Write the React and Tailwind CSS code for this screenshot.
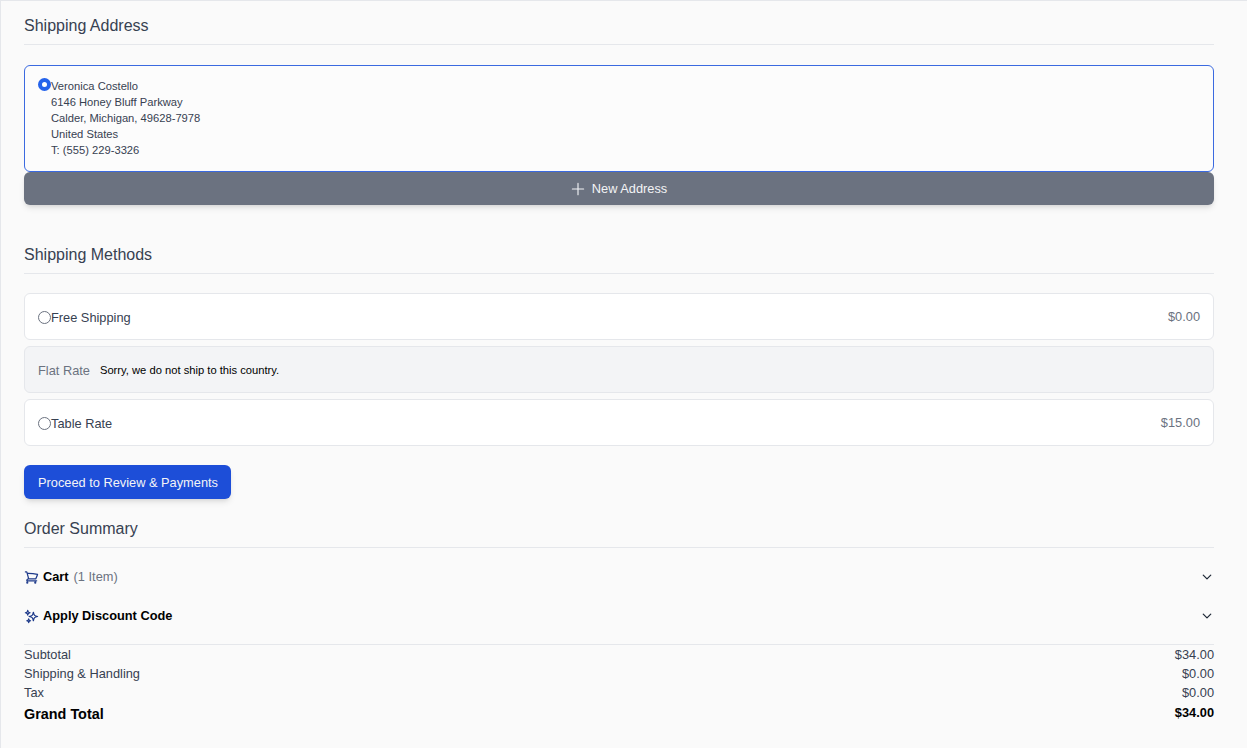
import React from "react";
import { HiOutlineChevronDown, HiOutlinePlus, HiOutlineShoppingCart, HiOutlineSparkles } from "react-icons/hi2";

const Heading = ({ children }) => (
  <div className="border-b border-[#e5e7eb] pb-[6px] text-[16px] leading-[24px] text-[#374151]">{children}</div>
);

const Radio = () => (
  <span className="h-[13px] w-[13px] shrink-0 rounded-full border-[1.5px] border-[#6b7280] bg-white" />
);

const Method = ({ name, price }) => (
  <div className="flex h-[47px] items-center justify-between rounded-md border border-[#e5e7eb] bg-white px-[13px] text-[12.8px] text-[#374151]">
    <div className="flex items-center pt-[2px]">
      <Radio />
      <span>{name}</span>
    </div>
    <span className="text-[#6b7280]">{price}</span>
  </div>
);

const Row = ({ label, value }) => (
  <div className="flex h-[19px] items-center justify-between text-[12.8px] text-[#374151]">
    <span>{label}</span>
    <span>{value}</span>
  </div>
);

const App = () => {
  return (
    <div className="min-h-[748px] border-l border-t border-[#e5e7eb] bg-[#fafafa] pl-[23px] pr-[33px] pt-[13px] font-['Liberation_Sans',Arial,sans-serif]">
      <Heading>Shipping Address</Heading>
      <div className="mt-5 h-[107px] rounded-md border border-[#3b6ae0] bg-[#fcfcfc] px-[13px] pt-[12px] text-[11.2px] leading-4 text-[#374151]">
        <div className="flex items-start">
          <span className="h-[13px] w-[13px] shrink-0 rounded-full border-[4px] border-[#2563eb] bg-white" />
          <div>
            <div>Veronica Costello</div>
            <div>6146 Honey Bluff Parkway</div>
            <div>Calder, Michigan, 49628-7978</div>
            <div>United States</div>
            <div>T: (555) 229-3326</div>
          </div>
        </div>
      </div>
      <button className="flex h-[33px] w-full items-center justify-center gap-[5px] rounded-md bg-[#6b7280] pr-[2px] text-[12.8px] text-[#f3f4f6] shadow-md">
        <HiOutlinePlus size={18} />
        New Address
      </button>

      <div className="mt-[38px]">
        <Heading>Shipping Methods</Heading>
      </div>
      <div className="mt-[19px] flex flex-col gap-[6px]">
        <Method name="Free Shipping" price="$0.00" />
        <div className="flex h-[47px] items-center gap-[10px] rounded-md border border-[#e5e7eb] bg-[#f3f4f6] px-[13px] pt-[2px] text-[12.8px] text-[#6b7280]">
          <span>Flat Rate</span>
          <span className="text-[11.2px] text-black">Sorry, we do not ship to this country.</span>
        </div>
        <Method name="Table Rate" price="$15.00" />
      </div>
      <button className="mt-[19px] block h-[34px] rounded-md bg-[#1d4ed8] pl-[14px] pr-[13px] pt-[2px] text-[12.8px] text-[#f3f4f6] shadow-md">
        Proceed to Review &amp; Payments
      </button>

      <div className="mt-[18px]">
        <Heading>Order Summary</Heading>
      </div>
      <div className="mt-[19px] flex h-[20px] items-center justify-between">
        <div className="flex items-center text-[12.8px]">
          <HiOutlineShoppingCart size={15} strokeWidth={2} className="mr-[4px] text-[#1e3a8a]" />
          <span className="font-bold text-black">Cart</span>
          <span className="ml-[5px] text-[#6b7280]">(1 Item)</span>
        </div>
        <HiOutlineChevronDown size={12} strokeWidth={2.5} className="mr-px text-[#1f2937]" />
      </div>
      <div className="mt-[19px] flex h-[20px] items-center justify-between">
        <div className="flex items-center text-[12.8px]">
          <HiOutlineSparkles size={15} strokeWidth={2} className="mr-[4px] -scale-x-100 text-[#1e3a8a]" />
          <span className="font-bold text-black">Apply Discount Code</span>
        </div>
        <HiOutlineChevronDown size={12} strokeWidth={2.5} className="mr-px text-[#1f2937]" />
      </div>
      <div className="mt-[18px] border-t border-[#e5e7eb]">
        <Row label="Subtotal" value="$34.00" />
        <Row label="Shipping & Handling" value="$0.00" />
        <Row label="Tax" value="$0.00" />
        <div className="mt-[2px] flex h-[20px] items-center justify-between font-bold text-black">
          <span className="pt-[2px] text-[14.4px]">Grand Total</span>
          <span className="mb-[2px] text-[12.8px]">$34.00</span>
        </div>
      </div>
    </div>
  );
};

export default App;
